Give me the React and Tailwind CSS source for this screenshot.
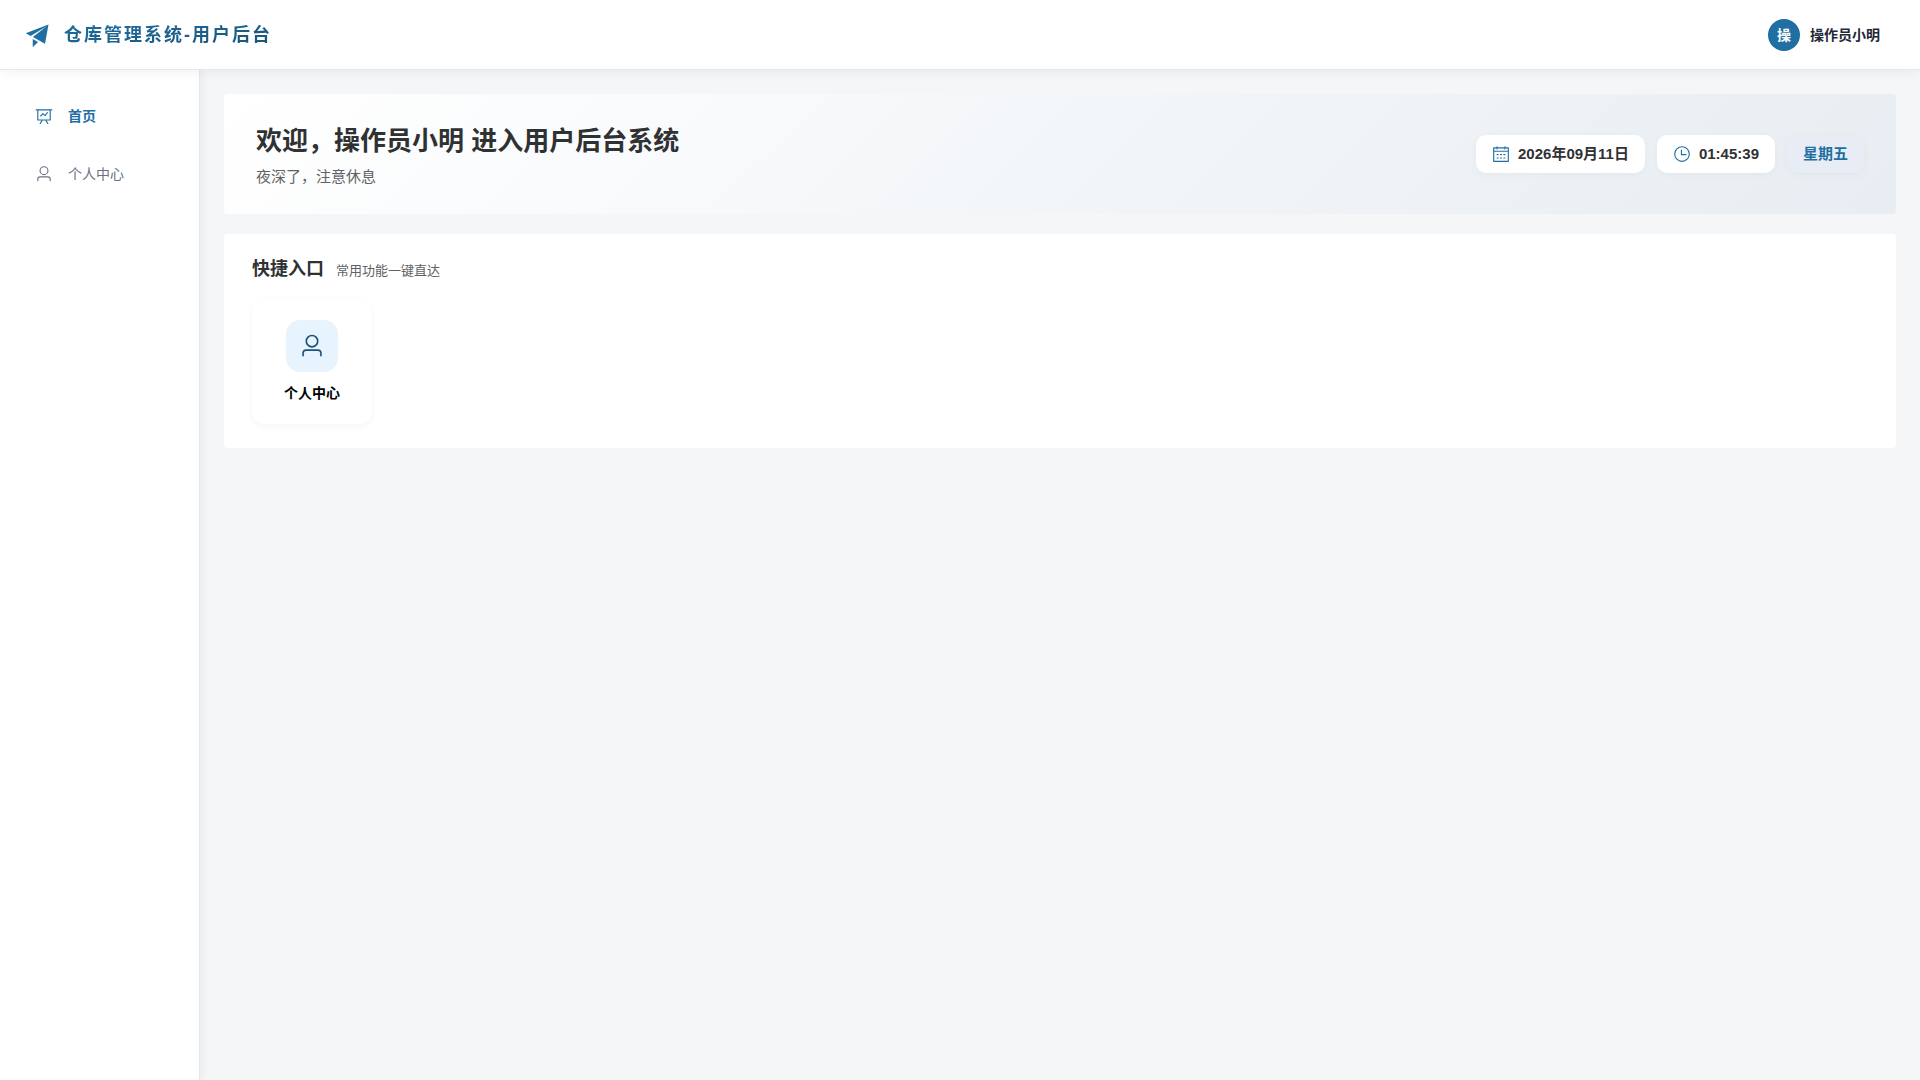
const PATHS = {
  promotion: ["m64 448 832-320-128 704-446.08-243.328L832 192 242.816 545.472zm256 512V657.024L512 768z"],
  board: [
    "M359.168 768H160a32 32 0 0 1-32-32V192H64a32 32 0 0 1 0-64h896a32 32 0 1 1 0 64h-64v544a32 32 0 0 1-32 32H665.216l110.848 192h-73.856L591.36 768H433.024L322.176 960H248.32zM832 192H192v512h640zM342.656 534.656a32 32 0 1 1-45.312-45.312L444.992 341.76l125.44 94.08L679.04 300.032a32 32 0 1 1 49.92 39.936L581.632 524.224 451.008 426.24 342.656 534.592z",
  ],
  user: [
    "M512 512a192 192 0 1 0 0-384 192 192 0 0 0 0 384m0 64a256 256 0 1 1 0-512 256 256 0 0 1 0 512m320 320v-96a96 96 0 0 0-96-96H288a96 96 0 0 0-96 96v96a32 32 0 1 1-64 0v-96a160 160 0 0 1 160-160h448a160 160 0 0 1 160 160v96a32 32 0 1 1-64 0",
  ],
  calendar: [
    "M128 384v512h768V192H768v32a32 32 0 1 1-64 0v-32H320v32a32 32 0 0 1-64 0v-32H128v128h768v64zm192-256h384V96a32 32 0 1 1 64 0v32h160a32 32 0 0 1 32 32v768a32 32 0 0 1-32 32H96a32 32 0 0 1-32-32V160a32 32 0 0 1 32-32h160V96a32 32 0 0 1 64 0zm-32 384h64a32 32 0 0 1 0 64h-64a32 32 0 0 1 0-64m0 192h64a32 32 0 1 1 0 64h-64a32 32 0 1 1 0-64m192-192h64a32 32 0 0 1 0 64h-64a32 32 0 0 1 0-64m0 192h64a32 32 0 1 1 0 64h-64a32 32 0 1 1 0-64m192-192h64a32 32 0 1 1 0 64h-64a32 32 0 1 1 0-64m0 192h64a32 32 0 1 1 0 64h-64a32 32 0 1 1 0-64",
  ],
  clock: [
    "M512 896a384 384 0 1 0 0-768 384 384 0 0 0 0 768m0 64a448 448 0 1 1 0-896 448 448 0 0 1 0 896",
    "M480 256a32 32 0 0 1 32 32v256a32 32 0 0 1-64 0V288a32 32 0 0 1 32-32",
    "M480 512h256q32 0 32 32t-32 32H480q-32 0-32-32t32-32",
  ],
};

function Icon({ name, className }) {
  return (
    <svg viewBox="0 0 1024 1024" fill="currentColor" aria-hidden="true" className={className}>
      {PATHS[name].map((d) => (
        <path key={d} d={d} />
      ))}
    </svg>
  );
}

function Header() {
  return (
    <header className="relative z-20 flex h-[70px] shrink-0 items-center justify-between border-b border-[#e4e7ed] bg-white px-6 shadow-[0_2px_12px_rgba(0,0,0,0.06)]">
      <div className="flex items-center gap-3">
        <Icon name="promotion" className="size-7 text-[#1f6fa3]" />
        <h1 className="bg-linear-to-br from-[#1f6fa3] to-[#1a5276] bg-clip-text text-lg leading-7 font-bold tracking-[2px] text-transparent">
          仓库管理系统-用户后台
        </h1>
      </div>
      <button type="button" className="flex items-center gap-2.5 px-4 py-1.5">
        <span className="flex size-8 items-center justify-center rounded-full bg-[#1f6fa3] text-sm font-bold text-white">
          操
        </span>
        <span className="text-sm font-bold text-[#1f2937]">操作员小明</span>
      </button>
    </header>
  );
}

function Sidebar() {
  return (
    <nav className="relative z-10 flex w-[200px] shrink-0 flex-col gap-2 border-r border-[#e4e7ed] bg-white px-2 pt-[21px] shadow-[2px_0_8px_rgba(0,0,0,0.06)]">
      <a href="#home" aria-current="page" className="flex h-[50px] items-center gap-[15px] px-[27px] text-sm font-bold text-[#1f6fa3]">
        <Icon name="board" className="size-[18px]" />
        首页
      </a>
      <a href="#profile" className="flex h-[50px] items-center gap-[15px] px-[27px] text-sm text-[#6b7280]">
        <Icon name="user" className="size-[18px]" />
        个人中心
      </a>
    </nav>
  );
}

const CHIP = "flex h-[38px] items-center gap-2 rounded-[10px] px-4 text-[15px] font-bold shadow-[0_2px_8px_rgba(0,0,0,0.04)]";

function Welcome() {
  return (
    <section className="flex min-h-[120px] items-center justify-between rounded bg-linear-135/srgb from-white to-[#e7edf2] px-8">
      <div>
        <h2 className="text-[26px] leading-[42px] font-bold text-[#303133]">欢迎，操作员小明 进入用户后台系统</h2>
        <p className="mt-1 text-[15px] leading-[22px] text-[#606266]">夜深了，注意休息</p>
      </div>
      <div className="flex items-center gap-3">
        <div className={`${CHIP} bg-white text-[#303133]`}>
          <Icon name="calendar" className="size-[18px] text-[#1f6fa3]" />
          <span>2026年09月11日</span>
        </div>
        <div className={`${CHIP} bg-white text-[#303133]`}>
          <Icon name="clock" className="size-[18px] text-[#1f6fa3]" />
          <span>01:45:39</span>
        </div>
        <div className={`${CHIP} bg-[#e8edf5] text-[#1f6fa3]`}>星期五</div>
      </div>
    </section>
  );
}

function QuickEntry() {
  return (
    <section className="rounded bg-white px-7 pt-5 pb-6">
      <div className="flex items-baseline gap-3">
        <h3 className="text-lg leading-[30px] font-bold text-[#303133]">快捷入口</h3>
        <span className="text-[13px] text-[#606266]">常用功能一键直达</span>
      </div>
      <button
        type="button"
        className="mt-4 flex h-[124px] w-[120px] flex-col items-center rounded-xl bg-white pt-5 shadow-[0_2px_8px_rgba(0,0,0,0.04)]"
      >
        <span className="flex size-[52px] items-center justify-center rounded-[14px] bg-[#e8f4fd] text-[#1a5276]">
          <Icon name="user" className="size-[26px]" />
        </span>
        <span className="mt-3 text-sm leading-[18px] font-bold text-black">个人中心</span>
      </button>
    </section>
  );
}

export default function App() {
  return (
    <div className="flex min-h-screen flex-col bg-[#f4f6f8] font-['Liberation_Sans','Noto_Sans_CJK_SC',sans-serif]">
      <Header />
      <div className="flex flex-1">
        <Sidebar />
        <main className="flex min-w-0 flex-1 flex-col gap-5 p-6">
          <Welcome />
          <QuickEntry />
        </main>
      </div>
    </div>
  );
}
